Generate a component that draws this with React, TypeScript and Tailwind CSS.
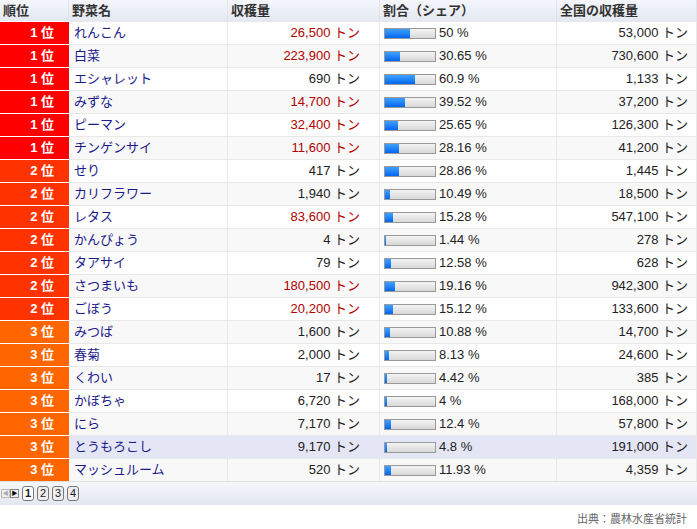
const rows: [number, string, string, number, string, string][] = [
  [1, "れんこん", "26,500", 50, "50 %", "53,000"],
  [1, "白菜", "223,900", 30.65, "30.65 %", "730,600"],
  [1, "エシャレット", "690", 60.9, "60.9 %", "1,133"],
  [1, "みずな", "14,700", 39.52, "39.52 %", "37,200"],
  [1, "ピーマン", "32,400", 25.65, "25.65 %", "126,300"],
  [1, "チンゲンサイ", "11,600", 28.16, "28.16 %", "41,200"],
  [2, "せり", "417", 28.86, "28.86 %", "1,445"],
  [2, "カリフラワー", "1,940", 10.49, "10.49 %", "18,500"],
  [2, "レタス", "83,600", 15.28, "15.28 %", "547,100"],
  [2, "かんぴょう", "4", 1.44, "1.44 %", "278"],
  [2, "タアサイ", "79", 12.58, "12.58 %", "628"],
  [2, "さつまいも", "180,500", 19.16, "19.16 %", "942,300"],
  [2, "ごぼう", "20,200", 15.12, "15.12 %", "133,600"],
  [3, "みつば", "1,600", 10.88, "10.88 %", "14,700"],
  [3, "春菊", "2,000", 8.13, "8.13 %", "24,600"],
  [3, "くわい", "17", 4.42, "4.42 %", "385"],
  [3, "かぼちゃ", "6,720", 4, "4 %", "168,000"],
  [3, "にら", "7,170", 12.4, "12.4 %", "57,800"],
  [3, "とうもろこし", "9,170", 4.8, "4.8 %", "191,000"],
  [3, "マッシュルーム", "520", 11.93, "11.93 %", "4,359"],
];
const rankBg = ["", "bg-[#ff0000]", "bg-[#ff3300]", "bg-[#ff6600]"];

export default function App() {
  return (
    <div className="w-[697px] h-[529px] bg-white text-[13px] text-[#222]" style={{ fontFamily: '"Liberation Sans", "Noto Sans CJK JP", sans-serif' }}>
      <div className="grid grid-cols-[69px_159px_152px_177px_140px]">
        {["順位", "野菜名", "収穫量", "割合（シェア）", "全国の収穫量"].map((h) => (
          <div key={h} className="h-[21px] px-[3px] flex items-center font-bold text-[#333] bg-gradient-to-b from-[#f4f6fb] to-[#e4e8f2] border-r border-[#e0e4ec]">{h}</div>
        ))}
        {rows.map((r, i) => {
          const hl = r[1] === "とうもろこし";
          const bg = hl ? "bg-[#e4e6f6]" : i % 2 ? "bg-[#f8f8f8]" : "bg-white";
          const big = parseInt(r[2].replace(/,/g, "")) >= 10000;
          const cell = `h-[23px] flex items-center border-t border-[#e8e8e8] border-r ${bg}`;
          return [
            <div key={i + "a"} className={`h-[23px] flex items-center justify-end pr-[15px] text-white font-bold border-t border-white ${rankBg[r[0]]}`}>{r[0]} 位</div>,
            <div key={i + "b"} className={`${cell} px-[5px] text-[#1a1a8c]`}>{r[1]}</div>,
            <div key={i + "c"} className={`${cell} justify-end pr-[19px] ${big ? "text-[#b00000]" : ""}`}>{r[2]} トン</div>,
            <div key={i + "d"} className={`${cell} pl-[4px] gap-[3px]`}>
              <div className="w-[52px] h-[11px] border border-[#999] bg-gradient-to-b from-[#f4f4f4] to-[#d8d8d8] overflow-hidden">
                <div className="h-full bg-gradient-to-b from-[#3fa0ff] to-[#0066ee]" style={{ width: `${r[3]}%` }} />
              </div>
              <span>{r[4]}</span>
            </div>,
            <div key={i + "e"} className={`${cell} justify-end pr-[8px]`}>{r[5]} トン</div>,
          ];
        })}
      </div>
      <div className="h-[24px] flex items-center gap-[3px] px-[1px] bg-gradient-to-b from-[#f6f7fa] to-[#e3e7f0] border-t border-[#e0e0e0]">
        <div className="flex">
          <span className="w-[9px] h-[9px] border border-[#bbb] bg-[#eee] text-[6px] text-[#aaa] flex items-center justify-center">◀</span>
          <span className="w-[9px] h-[9px] border border-[#888] bg-[#eee] text-[6px] text-black flex items-center justify-center">▶</span>
        </div>
        {[1, 2, 3, 4].map((n) => (
          <span key={n} className={`w-[12px] h-[15px] rounded-[3px] border border-[#777] text-[11px] flex items-center justify-center ${n === 1 ? "bg-white font-bold" : "bg-[#eee]"}`}>{n}</span>
        ))}
      </div>
      <div className="text-right pr-[10px] pt-[6px] text-[11px] text-[#666]">出典：農林水産省統計</div>
    </div>
  );
}
